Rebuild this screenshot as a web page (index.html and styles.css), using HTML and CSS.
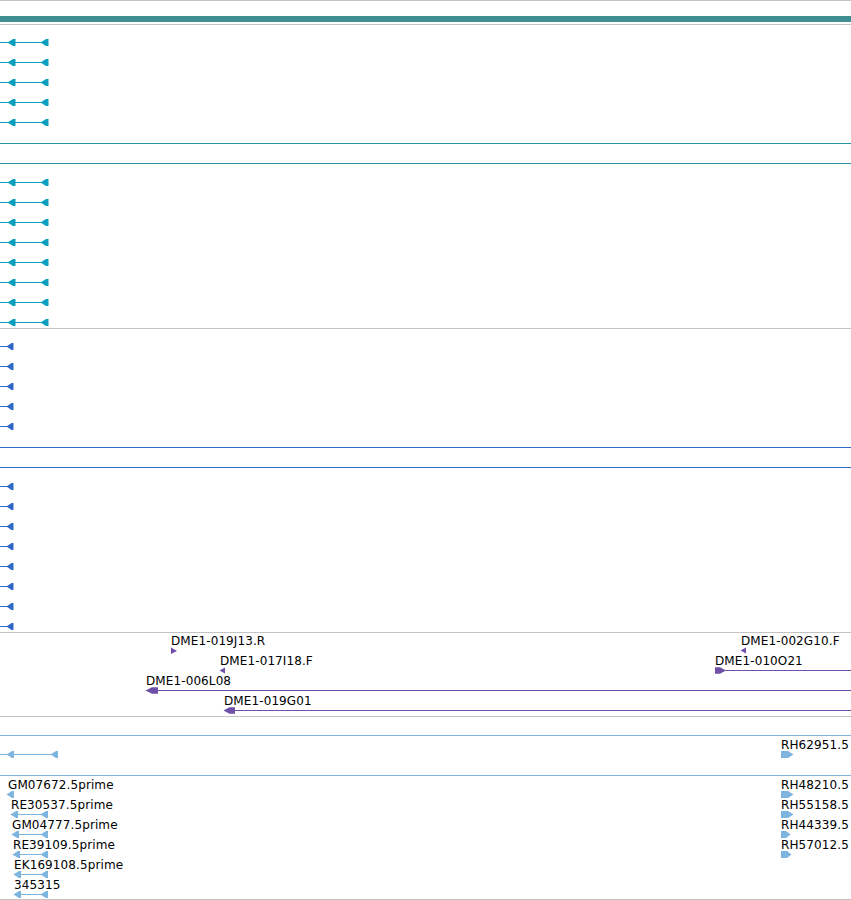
FILE: index.html
```html
<!DOCTYPE html>
<html>
<head>
<meta charset="utf-8">
<link rel="stylesheet" href="styles.css">
</head>
<body>
<div class="browser">
  <div class="ruler"><div class="ruler-bar"></div></div>

  <div class="track track-a">
    <svg class="canvas" width="851" height="303">
      <defs>
        <g id="tealRow">
          <rect x="0" y="0" width="47" height="1"/>
          <polygon points="7.5,0.5 13,-3 15.5,-3 15.5,4 13,4"/>
          <polygon points="40.5,0.5 46,-3 48.5,-3 48.5,4 46,4"/>
        </g>
      </defs>
      <g class="teal">
        <use href="#tealRow" y="17"/>
        <use href="#tealRow" y="37"/>
        <use href="#tealRow" y="57"/>
        <use href="#tealRow" y="77"/>
        <use href="#tealRow" y="97"/>
        <rect class="teal-long" x="0" y="118" width="851" height="1"/>
        <rect class="teal-long" x="0" y="138" width="851" height="1"/>
        <use href="#tealRow" y="157"/>
        <use href="#tealRow" y="177"/>
        <use href="#tealRow" y="197"/>
        <use href="#tealRow" y="217"/>
        <use href="#tealRow" y="237"/>
        <use href="#tealRow" y="257"/>
        <use href="#tealRow" y="277"/>
        <use href="#tealRow" y="297"/>
      </g>
    </svg>
  </div>

  <div class="track track-b">
    <svg class="canvas" width="851" height="303">
      <defs>
        <g id="blueRow">
          <rect x="0" y="0" width="13" height="1"/>
          <polygon points="6.5,0.5 11.5,-3 13.5,-3 13.5,4 11.5,4"/>
        </g>
      </defs>
      <g class="blue">
        <use href="#blueRow" y="17"/>
        <use href="#blueRow" y="37"/>
        <use href="#blueRow" y="57"/>
        <use href="#blueRow" y="77"/>
        <use href="#blueRow" y="97"/>
        <rect x="0" y="118" width="851" height="1"/>
        <rect x="0" y="138" width="851" height="1"/>
        <use href="#blueRow" y="157"/>
        <use href="#blueRow" y="177"/>
        <use href="#blueRow" y="197"/>
        <use href="#blueRow" y="217"/>
        <use href="#blueRow" y="237"/>
        <use href="#blueRow" y="257"/>
        <use href="#blueRow" y="277"/>
        <use href="#blueRow" y="297"/>
      </g>
    </svg>
  </div>

  <div class="track track-c">
    <svg class="canvas" width="851" height="83">
      <g class="labels">
        <text x="171" y="12">DME1-019J13.R</text>
        <text x="220" y="32">DME1-017I18.F</text>
        <text x="146" y="52">DME1-006L08</text>
        <text x="224" y="72">DME1-019G01</text>
        <text x="741" y="12">DME1-002G10.F</text>
        <text x="715" y="32">DME1-010O21</text>
      </g>
      <g class="purple">
        <polygon points="171,14.5 177,18 171,21"/>
        <polygon points="219.5,37.5 225,34.5 225,40.5"/>
        <rect x="146" y="57" width="705" height="1"/>
        <polygon points="145.5,57.5 152,54.2 158,54.2 158,60.8 152,60.8"/>
        <rect x="224" y="77" width="627" height="1"/>
        <polygon points="223.5,77.5 229.5,74.2 235,74.2 235,80.8 229.5,80.8"/>
        <polygon points="740.5,17.5 746,14.5 746,20.5"/>
        <rect x="715" y="37" width="136" height="1"/>
        <polygon points="715,34.2 720,34.2 726,37.5 720,40.8 715,40.8"/>
      </g>
    </svg>
  </div>

  <div class="track track-d">
    <svg class="canvas" width="851" height="182">
      <defs>
        <polygon id="lbLeft" points="-0.5,0.5 5,-3 7,-3 7,4 5,4"/>
        <polygon id="lbRight" points="0,-3 7,-3 12.5,0.5 7,4 0,4"/>
      </defs>
      <g class="labels">
        <text x="781" y="32">RH62951.5</text>
        <text x="8" y="72">GM07672.5prime</text>
        <text x="11" y="92">RE30537.5prime</text>
        <text x="12" y="112">GM04777.5prime</text>
        <text x="13" y="132">RE39109.5prime</text>
        <text x="14" y="152">EK169108.5prime</text>
        <text x="14" y="172">345315</text>
        <text x="781" y="72">RH48210.5</text>
        <text x="781" y="92">RH55158.5</text>
        <text x="781" y="112">RH44339.5</text>
        <text x="781" y="132">RH57012.5</text>
      </g>
      <g class="lightblue">
        <rect x="0" y="18" width="851" height="1"/>
        <rect x="0" y="37" width="57" height="1"/>
        <use href="#lbLeft" x="7" y="37"/>
        <use href="#lbLeft" x="51" y="37"/>
        <use href="#lbRight" x="781" y="37"/>
        <rect x="0" y="58" width="851" height="1"/>
        <use href="#lbLeft" x="7" y="77"/>

        <rect x="11" y="97" width="37" height="1"/>
        <use href="#lbLeft" x="11" y="97"/>
        <use href="#lbLeft" x="41" y="97"/>

        <rect x="12" y="117" width="36" height="1"/>
        <use href="#lbLeft" x="12" y="117"/>
        <use href="#lbLeft" x="41" y="117"/>

        <rect x="13" y="137" width="35" height="1"/>
        <use href="#lbLeft" x="13" y="137"/>
        <use href="#lbLeft" x="41" y="137"/>

        <rect x="14" y="157" width="34" height="1"/>
        <use href="#lbLeft" x="14" y="157"/>
        <use href="#lbLeft" x="41" y="157"/>

        <rect x="14" y="177" width="34" height="1"/>
        <use href="#lbLeft" x="14" y="177"/>
        <use href="#lbLeft" x="41" y="177"/>

        <use href="#lbRight" x="781" y="77"/>
        <use href="#lbRight" x="781" y="97"/>
        <polygon points="781,114 786,114 790.5,117.5 786,121 781,121"/>
        <polygon points="781,134 787,134 791.5,137.5 787,141 781,141"/>
      </g>
    </svg>
  </div>
</div>
</body>
</html>
```
FILE: styles.css
```css
html, body {
  margin: 0;
  padding: 0;
  background: #ffffff;
  overflow: hidden;
}

.browser {
  width: 851px;
  display: flex;
  flex-direction: column;
}

.ruler {
  border-top: 1px solid #c4c4c4;
  border-bottom: 1px solid #c4c4c4;
  padding: 15px 0 2px 0;
}

.ruler-bar {
  height: 6px;
  background: #3e8f8f;
}

.track {
  border-bottom: 1px solid #c4c4c4;
}

.canvas {
  display: block;
}

.canvas rect {
  shape-rendering: crispEdges;
}

.teal { fill: #0a9fbf; }
.teal-long { fill: #2b93a8; }
.blue { fill: #2f69c6; }
.purple { fill: #6e50a8; }
.lightblue { fill: #7db5df; }

.labels text {
  font-family: "DejaVu Sans", sans-serif;
  font-size: 12px;
  letter-spacing: 0.1px;
  fill: #000000;
}
```
